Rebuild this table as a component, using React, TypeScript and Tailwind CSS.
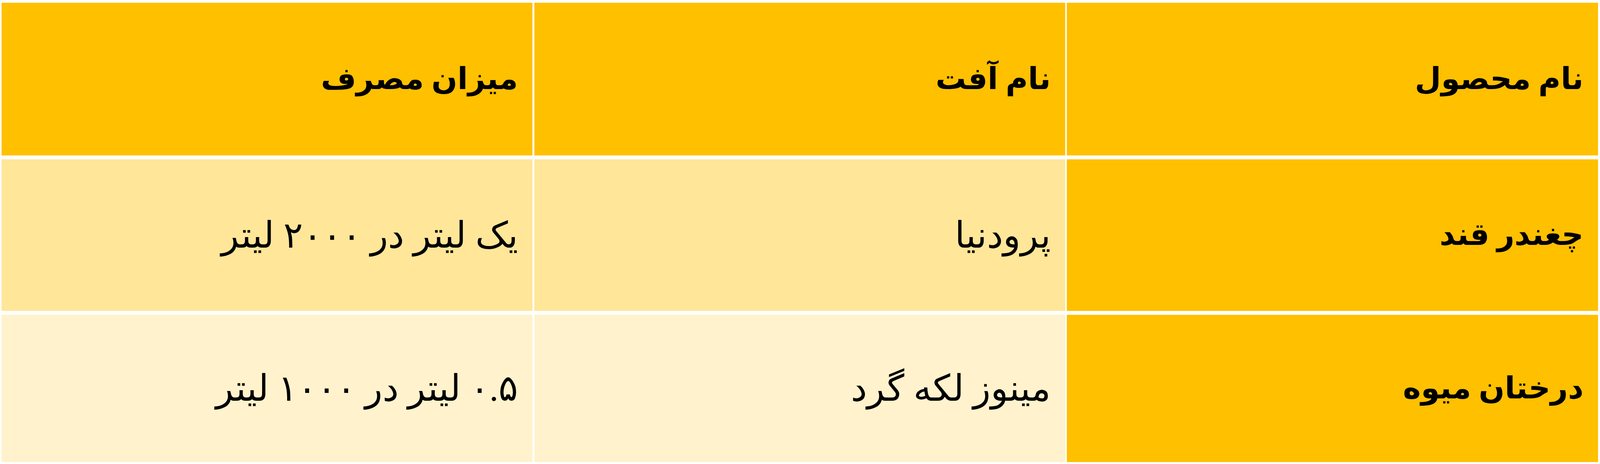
const rows = [
  { cells: ["نام محصول", "نام آفت", "میزان مصرف"], header: true, band: "" },
  { cells: ["چغندر قند", "پرودنیا", "یک لیتر در ۲۰۰۰ لیتر"], header: false, band: "bg-[#FFE699]" },
  { cells: ["درختان میوه", "مینوز لکه گرد", "۰.۵ لیتر در ۱۰۰۰ لیتر"], header: false, band: "bg-[#FFF2CC]" },
];

function Cell({ text, bold, bg }: { text: string; bold: boolean; bg: string }) {
  return (
    <div className={`flex items-center min-w-0 overflow-hidden pr-[0.9vw] ${bg}`}>
      <span
        className={`whitespace-nowrap leading-none text-black ${
          bold ? "font-bold text-[1.9vw]" : "font-normal text-[2.27vw]"
        }`}
      >
        {text}
      </span>
    </div>
  );
}

export default function App() {
  return (
    <div className="w-full h-screen min-h-[1188px] bg-white pt-[7px] pb-[5px] pl-[0.09vw] pr-[0.13vw] font-['Liberation_Serif','DejaVu_Sans',serif] flex">
      <div
        dir="rtl"
        className="grid flex-1 grid-cols-3 grid-rows-[391fr_388fr_377fr] gap-x-[0.115vw] gap-y-[10px]"
      >
        {rows.map((row, i) =>
          row.cells.map((c, j) => {
            const first = row.header || j === 0;
            return (
              <Cell
                key={`${i}-${j}`}
                text={c}
                bold={first}
                bg={first ? "bg-[#FFC000]" : row.band}
              />
            );
          })
        )}
      </div>
    </div>
  );
}
